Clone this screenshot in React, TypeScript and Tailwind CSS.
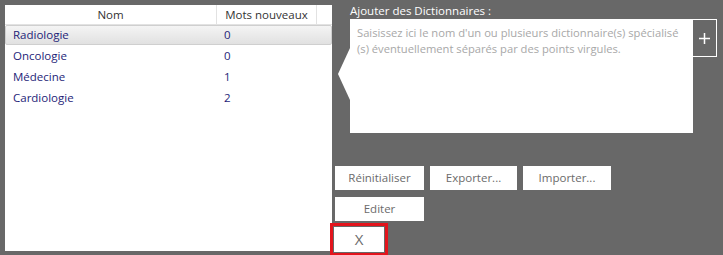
const rows = [
  { name: "Radiologie", count: 0 },
  { name: "Oncologie", count: 0 },
  { name: "Médecine", count: 1 },
  { name: "Cardiologie", count: 2 },
];

export default function App() {
  return (
    <div
      className="flex h-[255px] w-[723px] overflow-hidden bg-[#686868] text-[11.5px]"
      style={{ fontFamily: '"Open Sans", "Noto Sans", sans-serif' }}
    >
      <DictionaryList />

      <div className="ml-[3px] flex flex-col items-start">
        <div className="flex">
          <div className="flex w-[15px] items-start pt-[48px]">
            <svg width="15" height="52" viewBox="0 0 15 52" className="block">
              <polygon points="15,0 15,52 3,26" fill="#ffffff" />
            </svg>
          </div>
          <div>
            <p className="h-[19px] pt-[3px] leading-[15px] text-white">Ajouter des Dictionnaires :</p>
            <div className="flex items-start">
              <div className="h-[114px] w-[343px] bg-white px-[7px] pt-[6px] text-[11.2px] leading-[16px] text-[#a8a8a8]">
                <span className="whitespace-nowrap">Saisissez ici le nom d'un ou plusieurs dictionnaire(s) spécialisé</span>
                <br />
                (s) éventuellement séparés par des points virgules.
              </div>
              <button
                type="button"
                className="flex h-[38px] w-[24px] items-center justify-center border border-l-0 border-white"
              >
                <svg width="11" height="11" viewBox="0 0 11 11">
                  <path d="M5.5 0v11M0 5.5h11" stroke="#fff" strokeWidth="1.5" />
                </svg>
              </button>
            </div>
          </div>
        </div>

        <div className="mt-[33px] flex gap-[6px]">
          <ActionButton label="Réinitialiser" width="w-[89px]" />
          <ActionButton label="Exporter..." width="w-[87px]" />
          <ActionButton label="Importer..." width="w-[88px]" />
        </div>
        <div className="mt-[7px] flex">
          <ActionButton label="Editer" width="w-[89px]" />
        </div>
        <div className="-ml-[5px] mt-[2px] border-[3px] border-[#e3141c] p-[1px]">
          <button
            type="button"
            className="flex h-[25px] w-[50px] items-center justify-center bg-white text-[15px] leading-none text-[#6b6b6b]"
          >
            X
          </button>
        </div>
      </div>
    </div>
  );
}

function DictionaryList() {
  return (
    <div className="ml-[5px] mt-[5px] h-[246px] w-[327px] bg-white">
      <div className="flex h-[20px] border-b border-[#e2e2e2] leading-[20px] text-[#333333]">
        <div className="w-[212px] border-r border-[#e2e2e2] text-center">Nom</div>
        <div className="w-[100px] border-r border-[#e2e2e2] text-center">Mots nouveaux</div>
      </div>
      <div className="flex flex-col gap-[1px]">
        {rows.map((row, i) => (
          <div
            key={row.name}
            className={
              i === 0
                ? "flex h-[20px] items-center rounded-[2px] border border-[#cfcfcf] bg-gradient-to-b from-[#f4f4f4] to-[#e1e1e1] text-[#1e1e78]"
                : "flex h-[20px] items-center border border-transparent text-[#1e1e78]"
            }
          >
            <span className="w-[217px] pl-[7px]">{row.name}</span>
            <span className="pl-[1px]">{row.count}</span>
          </div>
        ))}
      </div>
    </div>
  );
}

function ActionButton({ label, width }: { label: string; width: string }) {
  return (
    <button
      type="button"
      className={`h-[24px] ${width} bg-white text-center text-[#6b6b6b]`}
    >
      {label}
    </button>
  );
}
